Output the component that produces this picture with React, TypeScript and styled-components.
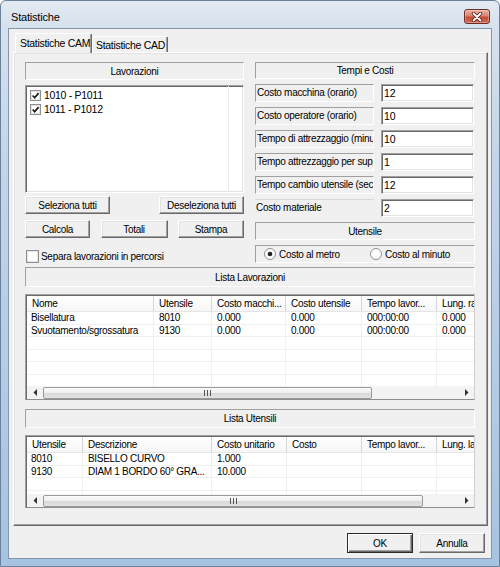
import React from "react";
import styled, { createGlobalStyle, css } from "styled-components";

const UI_FONT = `"Liberation Sans", Arial, sans-serif`;

const GlobalStyle = createGlobalStyle`
  * { box-sizing: border-box; }
  html, body { margin: 0; padding: 0; background: #ffffff; }
  body { font-family: ${UI_FONT}; font-size: 10px; letter-spacing: -0.3px; color: #000000; }
`;

const raised = css`
  border: 1px solid;
  border-color: #ffffff #696969 #696969 #ffffff;
  box-shadow: inset -1px -1px 0 #a0a0a0, inset 1px 1px 0 #e3e3e3;
`;

const sunken = css`
  border: 1px solid;
  border-color: #a0a0a0 #ffffff #ffffff #a0a0a0;
  box-shadow: inset 1px 1px 0 #696969, inset -1px -1px 0 #e3e3e3;
`;

const staticEdge = css`
  border: 1px solid;
  border-color: #a0a0a0 #ffffff #ffffff #a0a0a0;
`;

const Window = styled.div`
  width: 500px;
  height: 567px;
  display: flex;
  flex-direction: column;
  padding: 0 7px 7px;
  border: 1px solid #6b819b;
  border-radius: 6px 6px 0 0;
  background: linear-gradient(180deg, #e3eaf3 0px, #d6e1ed 27px, #c3d5e9 160px, #a6c3e2 100%);
`;

const TitleBar = styled.div`
  height: 27px;
  display: flex;
  align-items: center;
  padding: 4px 2px 0 3px;
`;

const Title = styled.span`
  flex: 1;
  font-size: 11px;
  letter-spacing: -0.2px;
`;

const CloseButton = styled.div`
  width: 26px;
  height: 15px;
  display: flex;
  align-items: center;
  justify-content: center;
  border: 1px solid #6d2c24;
  border-radius: 3px;
  background: linear-gradient(180deg, #eab0a2 0%, #d98472 45%, #c34c38 55%, #d06a55 100%);
  box-shadow: inset 0 0 0 1px rgba(255, 255, 255, 0.3);
`;

const Client = styled.div`
  flex: 1;
  display: flex;
  flex-direction: column;
  padding: 4px 3px 0 4px;
  background: #f0f0f0;
  border: 1px solid #8497ad;
`;

const TabStrip = styled.div`
  height: 19px;
  display: flex;
  align-items: flex-end;
  padding-left: 2px;
`;

const Tab = styled.div<{ $active?: boolean }>`
  position: relative;
  height: ${({ $active }) => ($active ? 20 : 16)}px;
  width: ${({ $active }) => ($active ? 77 : 76)}px;
  margin-bottom: ${({ $active }) => ($active ? -1 : 0)}px;
  z-index: ${({ $active }) => ($active ? 1 : 0)};
  padding: ${({ $active }) => ($active ? "2px 0 0 4px" : "1px 0 0 3px")};
  font-size: 10.5px;
  line-height: 14px;
  white-space: nowrap;
  background: #f0f0f0;
  border: 1px solid;
  border-bottom: none;
  border-color: #ffffff #696969 transparent #ffffff;
  border-radius: 2px 2px 0 0;
  box-shadow: inset -1px 0 0 #a0a0a0;
`;

const Panel = styled.div`
  width: 475px;
  height: 474px;
  padding: 9px 12px 0 11px;
  background: #f0f0f0;
  ${raised};
`;

const TopGrid = styled.div`
  display: grid;
  grid-template-columns: 219px 220px;
  column-gap: 11px;
`;

const Column = styled.div<{ $gap?: number }>`
  display: flex;
  flex-direction: column;
  gap: ${({ $gap = 0 }) => $gap}px;
`;

const SectionHeader = styled.div<{ $h: number; $mt?: number }>`
  height: ${({ $h }) => $h}px;
  margin-top: ${({ $mt = 0 }) => $mt}px;
  display: flex;
  align-items: center;
  justify-content: center;
  ${staticEdge};
`;

const ListBox = styled.div`
  margin-top: 5px;
  height: 108px;
  background: #ffffff;
  ${sunken};
`;

const ListItems = styled.div`
  width: 203px;
  height: 100%;
  padding: 2px 0 0 4px;
  border-right: 1px solid #ececec;
`;

const ListItem = styled.div`
  height: 14px;
  display: flex;
  align-items: center;
  gap: 3px;
  font-size: 10.5px;
`;

const ButtonRow = styled.div<{ $mt: number }>`
  margin-top: ${({ $mt }) => $mt}px;
  display: flex;
  justify-content: space-between;
`;

const Button = styled.button<{ $w: number; $h?: number; $default?: boolean }>`
  width: ${({ $w }) => $w}px;
  height: ${({ $h = 18 }) => $h}px;
  padding: 0;
  font-family: ${UI_FONT};
  font-size: 10px;
  letter-spacing: -0.3px;
  color: #000000;
  background: #f0f0f0;
  ${raised};
  ${({ $default }) =>
    $default &&
    css`
      border-color: #2b2b2b;
      box-shadow: inset 1px 1px 0 #ffffff, inset -1px -1px 0 #696969, inset -2px -2px 0 #a0a0a0;
    `}
`;

const CheckRow = styled.label`
  margin-top: 12px;
  height: 13px;
  display: flex;
  align-items: center;
  gap: 2px;
  padding-left: 1px;
`;

const FieldRow = styled.div`
  height: 18px;
  display: flex;
  gap: 7px;
`;

const FieldLabel = styled.div<{ $flat?: boolean }>`
  width: 119px;
  padding-left: 1px;
  line-height: 16px;
  white-space: nowrap;
  overflow: hidden;
  ${({ $flat }) =>
    $flat
      ? css`
          border-top: 1px solid #d8d8d8;
        `
      : staticEdge};
`;

const FieldInput = styled.input`
  width: 93px;
  height: 18px;
  padding: 0 0 0 2px;
  font-family: ${UI_FONT};
  font-size: 10.5px;
  color: #000000;
  background: #ffffff;
  outline: none;
  ${sunken};
`;

const RadioBox = styled.div`
  height: 18px;
  display: grid;
  grid-template-columns: 106px 1fr;
  align-items: center;
  padding-left: 8px;
  ${staticEdge};
`;

const RadioItem = styled.label`
  display: flex;
  align-items: center;
  gap: 3px;
  white-space: nowrap;
`;

const ListFrame = styled.div<{ $h: number; $mt: number }>`
  height: ${({ $h }) => $h}px;
  margin-top: ${({ $mt }) => $mt}px;
  display: flex;
  flex-direction: column;
  background: #ffffff;
  border: 1px solid #a0a0a0;
  border-right-color: #d0d0d0;
  border-bottom-color: #8e8e8e;
  box-shadow: inset 1px 1px 0 #696969;
  padding: 1px 0 0 1px;
`;

const ListScroll = styled.div`
  flex: 1;
  overflow: hidden;
  display: flex;
  flex-direction: column;
`;

const HeaderRow = styled.div`
  height: 16px;
  flex: none;
  display: flex;
  background: linear-gradient(180deg, #ffffff 0%, #f6f6f6 100%);
  border-bottom: 1px solid #e5e5e5;
`;

const HeaderCell = styled.div<{ $w: number }>`
  flex: none;
  width: ${({ $w }) => $w}px;
  padding-left: 5px;
  line-height: 15px;
  white-space: nowrap;
  overflow: hidden;
  border-right: 1px solid #d5d5d5;
`;

const BodyRow = styled.div`
  height: 12.5px;
  flex: none;
  display: flex;
  border-bottom: 1px solid #f0f0f0;
`;

const BodyCell = styled.div<{ $w: number; $first?: boolean }>`
  flex: none;
  width: ${({ $w }) => $w}px;
  padding-left: ${({ $first }) => ($first ? 4 : 5)}px;
  line-height: 12px;
  white-space: nowrap;
  overflow: hidden;
  border-right: 1px solid #f0f0f0;
`;

const ScrollBar = styled.div`
  height: 13px;
  flex: none;
  display: flex;
  align-items: center;
  background: #f3f3f3;
`;

const ScrollArrow = styled.div`
  width: 15px;
  height: 13px;
  flex: none;
  display: flex;
  align-items: center;
  justify-content: center;
`;

const ScrollTrack = styled.div`
  flex: 1;
  height: 13px;
  display: flex;
  align-items: center;
  padding-left: 1px;
`;

const Thumb = styled.div`
  height: 12px;
  display: flex;
  align-items: center;
  justify-content: center;
  border: 1px solid #9a9a9a;
  border-radius: 2px;
  background: linear-gradient(180deg, #fbfbfb 0%, #eeeeee 50%, #d9d9d9 51%, #e2e2e2 100%);
`;

const Footer = styled.div`
  display: flex;
  justify-content: flex-end;
  gap: 6px;
  padding: 7px 3px 0 0;
`;

function CheckBox({ size = 13, checked }: { size?: number; checked?: boolean }) {
  return (
    <svg width={size} height={size} viewBox={`0 0 ${size} ${size}`} style={{ flex: "none" }}>
      <rect x="0.5" y="0.5" width={size - 1} height={size - 1} fill="#ffffff" stroke="#8e8f8f" />
      <rect x="1.5" y="1.5" width={size - 3} height={size - 3} fill="none" stroke="#e4e4e4" />
      {checked && (
        <path
          d={`M${size * 0.24} ${size * 0.5} L${size * 0.42} ${size * 0.7} L${size * 0.78} ${size * 0.28}`}
          fill="none"
          stroke="#1a1a1a"
          strokeWidth="1.7"
        />
      )}
    </svg>
  );
}

function Radio({ checked }: { checked?: boolean }) {
  return (
    <svg width="12" height="12" viewBox="0 0 12 12" style={{ flex: "none" }}>
      <circle cx="6" cy="6" r="5.5" fill="#ffffff" stroke="#8e8f8f" />
      {checked && <circle cx="6" cy="6" r="2.3" fill="#222222" />}
    </svg>
  );
}

function Arrow({ dir }: { dir: "left" | "right" }) {
  return (
    <svg width="4" height="7" viewBox="0 0 4 7">
      <polygon points={dir === "left" ? "4,0 4,7 0.5,3.5" : "0,0 0,7 3.5,3.5"} fill="#333333" />
    </svg>
  );
}

function Grip() {
  return (
    <svg width="7" height="6" viewBox="0 0 7 6">
      <rect x="0" y="0" width="1" height="6" fill="#555555" />
      <rect x="3" y="0" width="1" height="6" fill="#555555" />
      <rect x="6" y="0" width="1" height="6" fill="#555555" />
    </svg>
  );
}

function CloseGlyph() {
  return (
    <svg width="12" height="10" viewBox="0 0 12 10">
      <path d="M2.5 1.5 L9.5 8.5 M9.5 1.5 L2.5 8.5" stroke="#5a2019" strokeWidth="3.4" strokeLinecap="round" />
      <path d="M2.5 1.5 L9.5 8.5 M9.5 1.5 L2.5 8.5" stroke="#ffffff" strokeWidth="1.8" strokeLinecap="round" />
    </svg>
  );
}

type Col = { title: string; w: number };

function ListView({
  columns,
  rows,
  visibleRows,
  height,
  marginTop,
  thumb,
}: {
  columns: Col[];
  rows: string[][];
  visibleRows: number;
  height: number;
  marginTop: number;
  thumb: number;
}) {
  const filled = [...rows];
  while (filled.length < visibleRows) filled.push(columns.map(() => ""));
  return (
    <ListFrame $h={height} $mt={marginTop}>
      <ListScroll>
        <HeaderRow>
          {columns.map((c) => (
            <HeaderCell key={c.title} $w={c.w}>
              {c.title}
            </HeaderCell>
          ))}
        </HeaderRow>
        {filled.map((r, i) => (
          <BodyRow key={i}>
            {columns.map((c, j) => (
              <BodyCell key={c.title} $w={c.w} $first={j === 0}>
                {r[j]}
              </BodyCell>
            ))}
          </BodyRow>
        ))}
      </ListScroll>
      <ScrollBar>
        <ScrollArrow>
          <Arrow dir="left" />
        </ScrollArrow>
        <ScrollTrack>
          <Thumb style={{ width: thumb }}>
            <Grip />
          </Thumb>
        </ScrollTrack>
        <ScrollArrow>
          <Arrow dir="right" />
        </ScrollArrow>
      </ScrollBar>
    </ListFrame>
  );
}

const lavorazioniCols: Col[] = [
  { title: "Nome", w: 127 },
  { title: "Utensile", w: 58 },
  { title: "Costo macchi...", w: 74 },
  { title: "Costo utensile", w: 76 },
  { title: "Tempo lavor...", w: 75 },
  { title: "Lung. rapidi", w: 80 },
];

const lavorazioniRows = [
  ["Bisellatura", "8010", "0.000", "0.000", "000:00:00", "0.000"],
  ["Svuotamento/sgrossatura", "9130", "0.000", "0.000", "000:00:00", "0.000"],
];

const utensiliCols: Col[] = [
  { title: "Utensile", w: 56 },
  { title: "Descrizione", w: 129 },
  { title: "Costo unitario", w: 75 },
  { title: "Costo", w: 75 },
  { title: "Tempo lavor...", w: 75 },
  { title: "Lung. lavorazione", w: 80 },
];

const utensiliRows = [
  ["8010", "BISELLO CURVO", "1.000", "", "", ""],
  ["9130", "DIAM 1 BORDO 60° GRA...", "10.000", "", "", ""],
];

const fields = [
  { label: "Costo macchina (orario)", value: "12" },
  { label: "Costo operatore (orario)", value: "10" },
  { label: "Tempo di attrezzaggio (minuti)", value: "10" },
  { label: "Tempo attrezzaggio per supporto", value: "1" },
  { label: "Tempo cambio utensile (secondi)", value: "12" },
  { label: "Costo materiale", value: "2", flat: true },
];

export default function App() {
  return (
    <>
      <GlobalStyle />
      <Window>
        <TitleBar>
          <Title>Statistiche</Title>
          <CloseButton>
            <CloseGlyph />
          </CloseButton>
        </TitleBar>
        <Client>
          <TabStrip>
            <Tab $active>Statistiche CAM</Tab>
            <Tab>Statistiche CAD</Tab>
          </TabStrip>
          <Panel>
            <TopGrid>
              <Column>
                <SectionHeader $h={18}>Lavorazioni</SectionHeader>
                <ListBox>
                  <ListItems>
                    <ListItem>
                      <CheckBox size={11} checked />
                      1010 - P1011
                    </ListItem>
                    <ListItem>
                      <CheckBox size={11} checked />
                      1011 - P1012
                    </ListItem>
                  </ListItems>
                </ListBox>
                <ButtonRow $mt={3}>
                  <Button $w={85}>Seleziona tutti</Button>
                  <Button $w={85}>Deseleziona tutti</Button>
                </ButtonRow>
                <ButtonRow $mt={6}>
                  <Button $w={65}>Calcola</Button>
                  <Button $w={67}>Totali</Button>
                  <Button $w={66}>Stampa</Button>
                </ButtonRow>
                <CheckRow>
                  <CheckBox />
                  Separa lavorazioni in percorsi
                </CheckRow>
              </Column>
              <Column $gap={5}>
                <SectionHeader $h={17}>Tempi e Costi</SectionHeader>
                {fields.map((f) => (
                  <FieldRow key={f.label}>
                    <FieldLabel $flat={f.flat}>{f.label}</FieldLabel>
                    <FieldInput readOnly value={f.value} />
                  </FieldRow>
                ))}
                <SectionHeader $h={18}>Utensile</SectionHeader>
                <RadioBox>
                  <RadioItem>
                    <Radio checked />
                    Costo al metro
                  </RadioItem>
                  <RadioItem>
                    <Radio />
                    Costo al minuto
                  </RadioItem>
                </RadioBox>
              </Column>
            </TopGrid>
            <SectionHeader $h={20} $mt={4}>
              Lista Lavorazioni
            </SectionHeader>
            <ListView
              columns={lavorazioniCols}
              rows={lavorazioniRows}
              visibleRows={6}
              height={106}
              marginTop={7}
              thumb={329}
            />
            <SectionHeader $h={19} $mt={9}>
              Lista Utensili
            </SectionHeader>
            <ListView
              columns={utensiliCols}
              rows={utensiliRows}
              visibleRows={4}
              height={73}
              marginTop={7}
              thumb={380}
            />
          </Panel>
          <Footer>
            <Button $w={66} $h={20} $default>
              OK
            </Button>
            <Button $w={66} $h={20}>
              Annulla
            </Button>
          </Footer>
        </Client>
      </Window>
    </>
  );
}
